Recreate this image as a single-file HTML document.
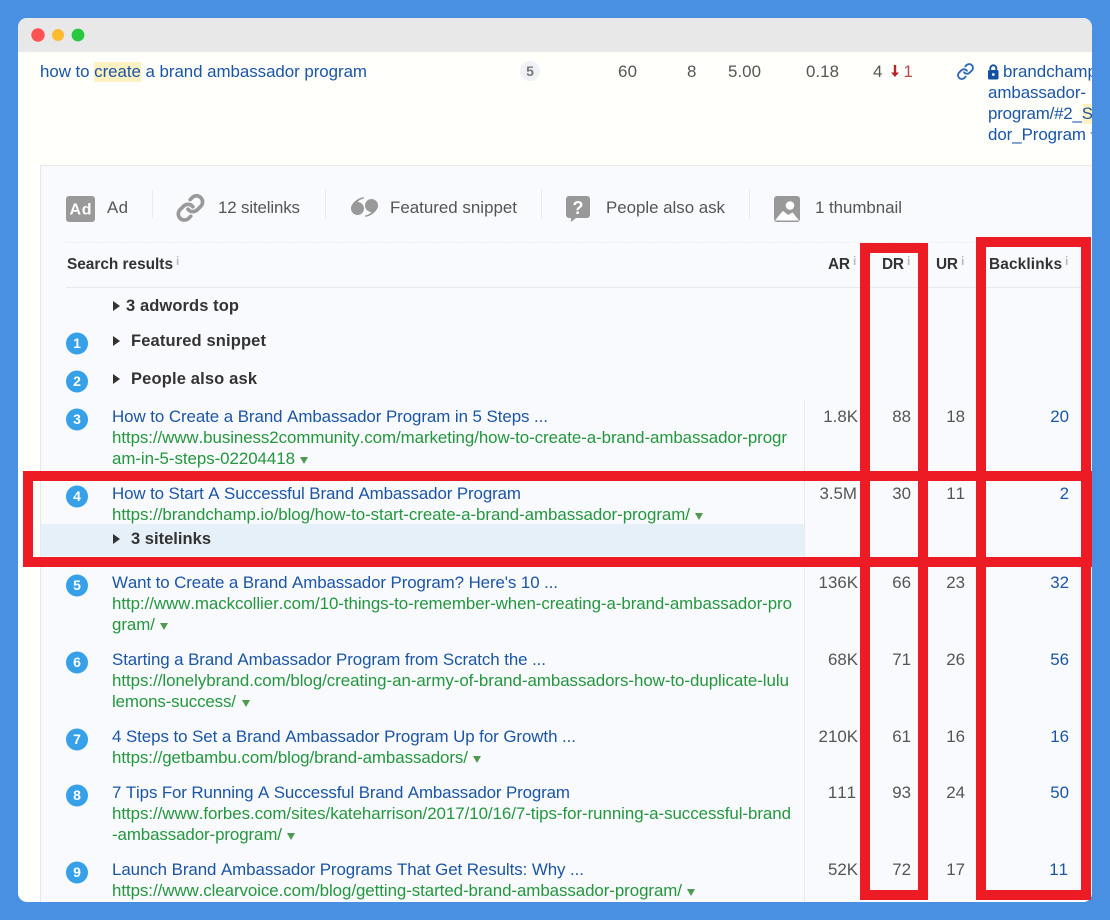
<!DOCTYPE html>
<html><head><meta charset="utf-8"><title>Search results</title>
<style>
html,body{margin:0;padding:0;background:#4a90e2;width:1110px;height:920px;overflow:hidden}
svg{display:block}
text{font-family:"Liberation Sans",Arial,sans-serif;font-size:16.9px;white-space:pre;font-kerning:none}
.l{fill:#1a55a6}.g{fill:#23973e}.n{fill:#555;text-anchor:end}.t{fill:#555}
.b{fill:#333;font-weight:bold}
.h{font-size:15.4px}
.s{font-size:16.5px}
.c{fill:#fff;font-weight:bold;font-size:14px;text-anchor:middle}
.i{fill:#bbb;font-size:12px;font-weight:bold}
</style></head><body>
<svg width="1110" height="920" viewBox="0 0 1110 920" xmlns="http://www.w3.org/2000/svg">
<defs><clipPath id="w"><rect x="18" y="18" width="1074" height="884" rx="9"/></clipPath></defs>
<rect width="1110" height="920" fill="#4a90e2"/>
<g clip-path="url(#w)">
<rect x="18" y="18" width="1074" height="884" fill="#fffffb"/>
<rect x="18" y="18" width="1074" height="33" fill="#e8e8e9"/>
<path d="M18 51.500h1074" stroke="#e6ebf0"/>
<circle cx="38" cy="35" r="6.700" fill="#ff5353"/><circle cx="58" cy="35" r="6" fill="#ffba2e"/><circle cx="78" cy="35" r="6.400" fill="#28c840"/>

<rect x="94" y="62" width="47" height="20" fill="#fff2c0"/>
<text class="l" x="40" y="77" textLength="327" lengthAdjust="spacing">how to create a brand ambassador program</text>
<circle cx="530" cy="71" r="10" fill="#eff1f4"/>
<text x="530" y="76" style="font-size:14px;font-weight:bold;fill:#777;text-anchor:middle">5</text>
<text class="t" x="618" y="77" textLength="19">60</text>
<text class="t" x="687" y="77" textLength="9">8</text>
<text class="t" x="728" y="77" textLength="33">5.00</text>
<text class="t" x="806" y="77" textLength="33">0.18</text>
<text class="t" x="873" y="77" textLength="9">4</text>
<path d="M895 65v9" stroke="#b3262b" stroke-width="2.400"/><path d="M891 72.500h8l-4 4.500z" fill="#b3262b"/>
<text x="903.500" y="77" style="fill:#b3474b">1</text>
<g transform="translate(956.500 62.500) scale(.75)" fill="none" stroke="#2f68b8" stroke-width="2.500" stroke-linecap="round">
<path d="M10 13a5 5 0 0 0 7.540.54l3-3a5 5 0 0 0-7.070-7.070l-1.720 1.710"/>
<path d="M14 11a5 5 0 0 0-7.540-.54l-3 3a5 5 0 0 0 7.070 7.070l1.710-1.710"/>
</g>
<rect x="988" y="70" width="10.500" height="9.500" rx="1.500" fill="#134fa3"/>
<path d="M990.300 70.500v-2.200a3 3 0 0 1 6 0v2.200" fill="none" stroke="#134fa3" stroke-width="1.800"/>
<circle cx="993.300" cy="74.500" r="1.400" fill="#fff"/>
<text class="l" x="1003" y="77">brandchamp</text>
<text class="l" x="988" y="98" textLength="98">ambassador-</text>
<rect x="1083" y="104" width="10" height="20" fill="#fff2c0"/>
<text class="l" x="988" y="119" textLength="105">program/#2_S</text>
<text class="l" x="988" y="140" textLength="98">dor_Program</text>
<path d="M1090 132h6l-3 4z" fill="#8aa"/>

<rect x="40.500" y="165.500" width="1100" height="800" fill="#f9fafd" stroke="#e6e8ea"/>

<rect x="66" y="196" width="29" height="26" rx="3" fill="#999"/>
<text x="80.500" y="214.500" textLength="22" style="font-size:16px;font-weight:bold;fill:#fff;text-anchor:middle">Ad</text>
<text class="t" x="107" y="213" textLength="21">Ad</text>
<path d="M152.500 190v28M325.500 190v28M541.500 190v28M749.500 190v28" stroke="#e8e9ec"/>
<g transform="translate(175.800 193.300) scale(1.220)" fill="none" stroke="#999" stroke-width="3" stroke-linecap="round">
<path d="M10 13a5 5 0 0 0 7.540.54l3-3a5 5 0 0 0-7.070-7.070l-1.720 1.710"/>
<path d="M14 11a5 5 0 0 0-7.540-.54l-3 3a5 5 0 0 0 7.070 7.070l1.710-1.710"/>
</g>
<text class="t" x="218" y="213" textLength="82">12 sitelinks</text>
<g fill="#999">
<circle cx="357.500" cy="208.500" r="6.500"/>
<path d="M363.500 197C357 198.500 351.500 203 351 208.500L357 203C358.500 200.500 361 199 364 198.500z"/>
<circle cx="371.500" cy="205.500" r="6.500"/>
<path d="M365.500 217C372 215.500 377.500 211 378 205.500L372 211C370.500 213.500 368 215 365 215.500z"/>
</g>
<text class="t" x="390" y="213" textLength="127">Featured snippet</text>
<path d="M569 196h18a3 3 0 0 1 3 3v16a3 3 0 0 1-3 3h-11l-5 4v-4h-2a3 3 0 0 1-3-3v-16a3 3 0 0 1 3-3z" fill="#999"/>
<text x="578" y="214" style="font-size:18px;font-weight:bold;fill:#fff;text-anchor:middle">?</text>
<text class="t" x="606" y="213" textLength="119">People also ask</text>
<rect x="774" y="196" width="26" height="26" rx="3" fill="#999"/>
<circle cx="790" cy="205.500" r="4.300" fill="#fff"/>
<path d="M776 220L783 211.500L788 215.500L792.500 213L798 220z" fill="#fff" stroke="#fff" stroke-linejoin="round"/>
<text class="t" x="815" y="213" textLength="87">1 thumbnail</text>

<path d="M66 242.500h1030" stroke="#eeeff1" stroke-dasharray="2 1"/>
<path d="M66 287.500h1030" stroke="#e8eaed"/>
<text class="b h" x="67" y="269" textLength="106">Search results</text>
<text class="i" x="176" y="265">i</text>
<text class="b h" x="828" y="269" textLength="22">AR</text><text class="i" x="853" y="265">i</text>
<text class="b h" x="882" y="269" textLength="22">DR</text><text class="i" x="907" y="265">i</text>
<text class="b h" x="936" y="269" textLength="22">UR</text><text class="i" x="961" y="265">i</text>
<text class="b h" x="989" y="269" textLength="73">Backlinks</text><text class="i" x="1065" y="265">i</text>

<rect x="41" y="524" width="764" height="32" fill="#e6f0f9"/>
<path d="M804.500 399v503" stroke="#e8eaed"/>

<g fill="#333">
<path d="M113 301l7 5-7 5z"/><path d="M113 336l7 5-7 5z"/><path d="M113 374l7 5-7 5z"/><path d="M113 534l7 5-7 5z"/>
</g>
<text class="b s" x="126" y="311" textLength="113">3 adwords top</text>
<text class="b s" x="131" y="346" textLength="135">Featured snippet</text>
<text class="b s" x="131" y="384" textLength="126">People also ask</text>
<text class="b s" x="131" y="544" textLength="80">3 sitelinks</text>

<g fill="#36a0e8">
<circle cx="77" cy="343.500" r="11"/><circle cx="77" cy="381.500" r="11"/><circle cx="77" cy="419.500" r="11"/><circle cx="77" cy="496.500" r="11"/><circle cx="77" cy="585.500" r="11"/><circle cx="77" cy="662.500" r="11"/><circle cx="77" cy="739.500" r="11"/><circle cx="77" cy="795.500" r="11"/><circle cx="77" cy="872.500" r="11"/>
</g>
<text class="c" x="77" y="348">1</text><text class="c" x="77" y="386">2</text><text class="c" x="77" y="424">3</text><text class="c" x="77" y="501">4</text><text class="c" x="77" y="590">5</text><text class="c" x="77" y="667">6</text><text class="c" x="77" y="744">7</text><text class="c" x="77" y="800">8</text><text class="c" x="77" y="877">9</text>

<text class="l" x="112" y="422" textLength="436">How to Create a Brand Ambassador Program in 5 Steps ...</text>
<text class="g" x="112" y="443" textLength="675">https://www.business2community.com/marketing/how-to-create-a-brand-ambassador-progr</text>
<text class="g" x="112" y="464" textLength="183">am-in-5-steps-02204418</text>

<text class="l" x="112" y="499" textLength="409">How to Start A Successful Brand Ambassador Program</text>
<text class="g" x="112" y="520" textLength="578">https://brandchamp.io/blog/how-to-start-create-a-brand-ambassador-program/</text>

<text class="l" x="112" y="588" textLength="446">Want to Create a Brand Ambassador Program? Here's 10 ...</text>
<text class="g" x="112" y="609" textLength="680">http://www.mackcollier.com/10-things-to-remember-when-creating-a-brand-ambassador-pro</text>
<text class="g" x="112" y="630" textLength="43">gram/</text>

<text class="l" x="112" y="665" textLength="434">Starting a Brand Ambassador Program from Scratch the ...</text>
<text class="g" x="112" y="686" textLength="677">https://lonelybrand.com/blog/creating-an-army-of-brand-ambassadors-how-to-duplicate-lulu</text>
<text class="g" x="112" y="707" textLength="124">lemons-success/</text>

<text class="l" x="112" y="742" textLength="464">4 Steps to Set a Brand Ambassador Program Up for Growth ...</text>
<text class="g" x="112" y="763" textLength="356">https://getbambu.com/blog/brand-ambassadors/</text>

<text class="l" x="112" y="798" textLength="458">7 Tips For Running A Successful Brand Ambassador Program</text>
<text class="g" x="112" y="819" textLength="679">https://www.forbes.com/sites/kateharrison/2017/10/16/7-tips-for-running-a-successful-brand</text>
<text class="g" x="112" y="840" textLength="170">-ambassador-program/</text>

<text class="l" x="112" y="875" textLength="472">Launch Brand Ambassador Programs That Get Results: Why ...</text>
<text class="g" x="112" y="896" textLength="570">https://www.clearvoice.com/blog/getting-started-brand-ambassador-program/</text>

<g fill="#4f9a4f">
<path d="M300 457h8l-4 7z"/><path d="M695 513h8l-4 7z"/><path d="M160 623h8l-4 7z"/><path d="M242 700h8l-4 7z"/><path d="M473 756h8l-4 7z"/><path d="M287 833h8l-4 7z"/><path d="M687 889h8l-4 7z"/>
</g>

<text class="n" x="858" y="422">1.8K</text><text class="n" x="911" y="422">88</text><text class="n" x="965" y="422">18</text><text class="l" x="1069" y="422" text-anchor="end">20</text>
<text class="n" x="857" y="499">3.5M</text><text class="n" x="911" y="499">30</text><text class="n" x="965" y="499">11</text><text class="l" x="1069" y="499" text-anchor="end">2</text>
<text class="n" x="858" y="588">136K</text><text class="n" x="911" y="588">66</text><text class="n" x="965" y="588">23</text><text class="l" x="1069" y="588" text-anchor="end">32</text>
<text class="n" x="858" y="665">68K</text><text class="n" x="911" y="665">71</text><text class="n" x="965" y="665">26</text><text class="l" x="1069" y="665" text-anchor="end">56</text>
<text class="n" x="858" y="742">210K</text><text class="n" x="911" y="742">61</text><text class="n" x="965" y="742">16</text><text class="l" x="1069" y="742" text-anchor="end">16</text>
<text class="n" x="856" y="798">111</text><text class="n" x="911" y="798">93</text><text class="n" x="965" y="798">24</text><text class="l" x="1069" y="798" text-anchor="end">50</text>
<text class="n" x="858" y="875">52K</text><text class="n" x="911" y="875">72</text><text class="n" x="965" y="875">17</text><text class="l" x="1068" y="875" text-anchor="end">11</text>
</g>

<g fill="#ed1c24">
<path fill-rule="evenodd" d="M860 243h68v657h-68zM870 253v637h48v-637z"/>
<path fill-rule="evenodd" d="M976 237h115v663h-115zM986 247v643h95v-643z"/>
<path fill-rule="evenodd" d="M23 471h1069v96h-1069zM33 481v76h1048v-76z"/>
<rect x="1081" y="481" width="10" height="76"/>
</g>
</svg>
</body></html>
